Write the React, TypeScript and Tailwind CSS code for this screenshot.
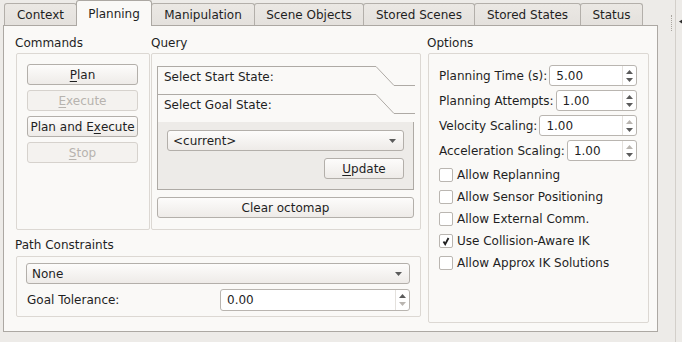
import type { ReactNode } from 'react'

const TABS: { label: string; w: string; active?: boolean }[] = [
  { label: 'Context', w: 'w-[73px]' },
  { label: 'Planning', w: 'w-[76px]', active: true },
  { label: 'Manipulation', w: 'w-[104px]' },
  { label: 'Scene Objects', w: 'w-[110px]' },
  { label: 'Stored Scenes', w: 'w-[112px]' },
  { label: 'Stored States', w: 'w-[107px]' },
  { label: 'Status', w: 'w-[63px]' },
]

function Arrow({ up, dim }: { up?: boolean; dim?: boolean }) {
  return (
    <svg width="7" height="4" viewBox="0 0 7 4" className="block">
      <path d={up ? 'M0 4 L3.5 0 L7 4 Z' : 'M0 0 L7 0 L3.5 4 Z'} fill={dim ? '#b9b5b0' : '#5b5b5b'} />
    </svg>
  )
}

function Button({
  children,
  disabled,
  className = '',
}: {
  children: ReactNode
  disabled?: boolean
  className?: string
}) {
  return (
    <div
      className={`flex h-[21px] items-center justify-center rounded-[3px] border ${
        disabled
          ? 'border-[#d6d2cd] bg-[#f4f2ef] text-[#b7b3ae]'
          : 'border-[#b3afaa] bg-linear-to-b from-[#fdfcfb] to-[#eeebe8]'
      } ${className}`}
    >
      {children}
    </div>
  )
}

function Combo({ value, className = '' }: { value: string; className?: string }) {
  return (
    <div
      className={`flex h-[21px] items-center justify-between rounded-[3px] border border-[#b3afaa] bg-linear-to-b from-[#fdfcfb] to-[#eeebe8] pl-[5px] pr-[7px] ${className}`}
    >
      <span>{value}</span>
      <Arrow />
    </div>
  )
}

function Spin({
  value,
  upDim,
  downDim,
  className = '',
}: {
  value: string
  upDim?: boolean
  downDim?: boolean
  className?: string
}) {
  return (
    <div className={`flex h-[21px] rounded-[3px] border border-[#b9b5b0] bg-white ${className}`}>
      <div className="flex flex-1 items-center pl-[6px]">{value}</div>
      <div className="flex w-[14px] flex-col items-center justify-center gap-[4px] border-l border-[#e4e1dd]">
        <Arrow up dim={upDim} />
        <Arrow dim={downDim} />
      </div>
    </div>
  )
}

function Check({ label, checked }: { label: string; checked?: boolean }) {
  return (
    <div className="flex h-[22px] items-center gap-[4px]">
      <div className="flex h-[14px] w-[14px] items-center justify-center rounded-[2px] border border-[#bab6b1] bg-white">
        {checked && (
          <svg width="12" height="12" viewBox="0 0 12 12">
            <path d="M3.5 6.5 L5.2 9.2 L8.5 3" fill="none" stroke="#1f1f1f" strokeWidth="1.8" />
          </svg>
        )}
      </div>
      <span>{label}</span>
    </div>
  )
}

function ToolHeader({ label }: { label: string }) {
  return (
    <div className="relative h-[28px] pl-[6px] pt-[4px]">
      <svg width="257" height="28" viewBox="0 0 257 28" className="absolute left-0 top-0">
        <path d="M0 0.5 H218 L236 19.5 H257" fill="none" stroke="#aeaaa5" />
      </svg>
      <span className="relative">{label}</span>
    </div>
  )
}

function U({ children }: { children: ReactNode }) {
  return <span className="underline underline-offset-2">{children}</span>
}

export default function App() {
  return (
    <div className="flex h-[342px] w-[682px] overflow-hidden bg-[#edebe8] font-['DejaVu_Sans',sans-serif] text-[12px] leading-[14px] text-[#1f1f1f]">
      <div className="pl-[3px]">
        {/* tab bar */}
        <div className="flex h-[25px] items-end pl-[1px]">
          {TABS.map((t, i) =>
            t.active ? (
              <div
                key={t.label}
                className={`relative z-10 -mb-px flex h-[26px] items-center justify-center rounded-t-[3px] border border-b-0 border-[#aca8a3] bg-[#faf9f7] ${t.w} ${i ? '-ml-px' : ''}`}
              >
                {t.label}
              </div>
            ) : (
              <div
                key={t.label}
                className={`flex h-[22px] items-center justify-center rounded-t-[3px] border border-b-0 border-[#b3afaa] bg-linear-to-b from-[#ebe8e4] to-[#e4e1dd] ${t.w} ${i ? '-ml-px' : ''}`}
              >
                {t.label}
              </div>
            )
          )}
        </div>

        {/* tab pane */}
        <div className="flex h-[307px] w-[655px] gap-[7px] border border-[#aca8a3] bg-[#faf9f7] pl-[12px] pt-[10px]">
          <div className="flex w-[405px] flex-col">
            <div className="flex gap-[1px]">
              <div className="flex flex-col">
                <div className="-ml-px h-[14px]">Commands</div>
                <div className="mt-[3px] flex h-[177px] w-[134px] flex-col gap-[5px] rounded-[2px] border border-[#dcd8d3] pl-[10px] pr-[11px] pt-[10px]">
                  <Button>
                    <U>P</U>lan
                  </Button>
                  <Button disabled>
                    <U>E</U>xecute
                  </Button>
                  <Button>
                    Plan and E<U>x</U>ecute
                  </Button>
                  <Button disabled>
                    <U>S</U>top
                  </Button>
                </div>
              </div>
              <div className="flex flex-col">
                <div className="h-[14px]">Query</div>
                <div className="mt-[3px] flex h-[177px] w-[270px] flex-col rounded-[2px] border border-[#dcd8d3] pl-[5px] pr-[6px] pt-[12px]">
                  <div className="flex flex-col border-b border-l border-[#aeaaa5]">
                    <ToolHeader label="Select Start State:" />
                    <ToolHeader label="Select Goal State:" />
                    <div className="flex h-[67px] flex-col items-end border-r border-[#aeaaa5] bg-[#edebe8] px-[9px] pt-[8px]">
                      <Combo value="<current>" className="w-full" />
                      <Button className="mt-[7px] w-[80px]">
                        <U>U</U>pdate
                      </Button>
                    </div>
                  </div>
                  <Button className="mt-[7px]">Clear octomap</Button>
                </div>
              </div>
            </div>

            <div className="-ml-px mt-[8px] h-[14px]">Path Constraints</div>
            <div className="mt-[4px] flex h-[61px] flex-col gap-[5px] rounded-[2px] border border-[#dcd8d3] pl-[9px] pr-[10px] pt-[6px]">
              <Combo value="None" />
              <div className="flex items-center">
                <span className="w-[194px] pl-[1px]">Goal Tolerance:</span>
                <Spin value="0.00" downDim className="h-[22px] flex-1" />
              </div>
            </div>
          </div>

          <div className="flex flex-col">
            <div className="-ml-px h-[14px]">Options</div>
            <div className="mt-[3px] flex h-[270px] w-[221px] flex-col rounded-[2px] border border-[#dcd8d3] pl-[10px] pr-[11px] pt-[11px]">
              <div className="flex flex-col gap-[4px]">
                <div className="flex items-center gap-[2px]">
                  <span className="whitespace-nowrap">Planning Time (s):</span>
                  <Spin value="5.00" className="flex-1" />
                </div>
                <div className="flex items-center gap-[2px]">
                  <span className="whitespace-nowrap">Planning Attempts:</span>
                  <Spin value="1.00" className="flex-1" />
                </div>
                <div className="flex items-center gap-[2px]">
                  <span className="whitespace-nowrap">Velocity Scaling:</span>
                  <Spin value="1.00" upDim className="flex-1" />
                </div>
                <div className="flex items-center gap-[2px]">
                  <span className="whitespace-nowrap">Acceleration Scaling:</span>
                  <Spin value="1.00" upDim className="flex-1" />
                </div>
              </div>
              <div className="mt-[3px] flex flex-col">
                <Check label="Allow Replanning" />
                <Check label="Allow Sensor Positioning" />
                <Check label="Allow External Comm." />
                <Check label="Use Collision-Aware IK" checked />
                <Check label="Allow Approx IK Solutions" />
              </div>
            </div>
          </div>
        </div>
      </div>

      {/* dock splitter */}
      <div className="ml-[13px] mt-[15px] h-[16px] border-l border-dotted border-[#a9a59f]" />
      <div className="ml-[3px] h-full w-[7px] border-l border-[#d3cfca] pl-[3px] pt-[19px]">
        <svg width="4" height="5" viewBox="0 0 4 5" className="block">
          <path d="M0 2.5 L4 0 L4 5 Z" fill="#2e2e2e" />
        </svg>
      </div>
    </div>
  )
}
